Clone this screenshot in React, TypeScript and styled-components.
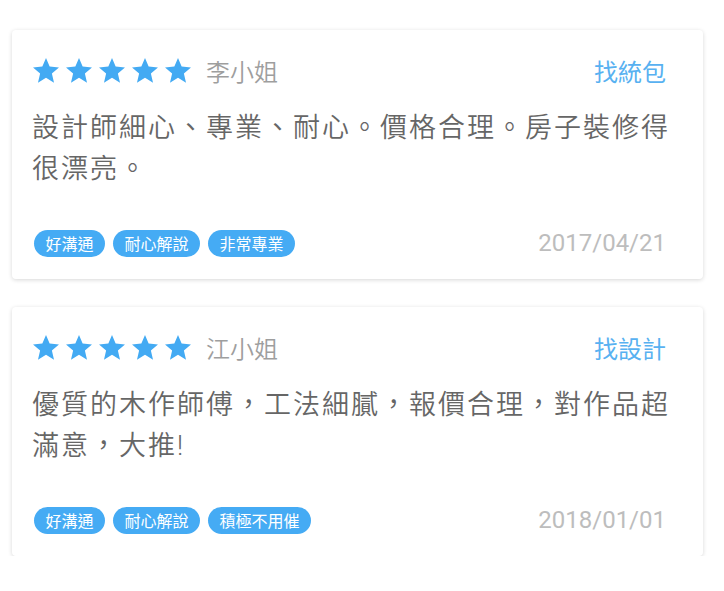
import styled, { createGlobalStyle } from "styled-components";

const GlobalStyle = createGlobalStyle`
  body {
    margin: 0;
    background: #ffffff;
    font-family: Roboto, "Noto Sans CJK TC", "Noto Sans", sans-serif;
  }
`;

interface Review {
  name: string;
  kind: string;
  text: string;
  tags: string[];
  date: string;
}

const reviews: Review[] = [
  {
    name: "李小姐",
    kind: "找統包",
    text: "設計師細心、專業、耐心。價格合理。房子裝修得很漂亮。",
    tags: ["好溝通", "耐心解說", "非常專業"],
    date: "2017/04/21",
  },
  {
    name: "江小姐",
    kind: "找設計",
    text: "優質的木作師傅，工法細膩，報價合理，對作品超滿意，大推!",
    tags: ["好溝通", "耐心解說", "積極不用催"],
    date: "2018/01/01",
  },
];

const List = styled.div`
  display: flex;
  flex-direction: column;
  gap: 28px;
  padding: 30px 0 0 12px;
  width: 691px;
`;

const Card = styled.div`
  background: #fff;
  border-radius: 4px;
  box-shadow: 0 1px 4px rgba(0, 0, 0, 0.16);
  padding: 23px 20px 22px 20px;
  height: 249px;
  box-sizing: border-box;
`;

const Header = styled.div`
  display: flex;
  align-items: center;
  height: 34px;
  padding-right: 17px;
`;

const Stars = styled.div`
  display: flex;
  gap: 7px;
  margin-left: 1px;
`;

const Name = styled.span`
  margin-left: 15px;
  font-size: 24px;
  color: #9e9e9e;
  font-weight: 350;
`;

const Kind = styled.span`
  margin-left: auto;
  font-size: 24px;
  color: #58b1f1;
`;

const Body = styled.p`
  margin: 21px 0 0 0;
  font-size: 27px;
  font-weight: 350;
  letter-spacing: 2px;
  line-height: 41px;
  color: #666666;
`;

const Footer = styled.div`
  display: flex;
  align-items: center;
  margin-top: 39px;
  padding-right: 17px;
`;

const Tags = styled.div`
  display: flex;
  gap: 8px;
  margin-left: 2px;
`;

const Tag = styled.span`
  display: inline-flex;
  align-items: center;
  height: 27px;
  padding: 0 11.5px;
  border-radius: 14px;
  background: #45abf4;
  color: #ffffff;
  font-size: 16px;
`;

const DateText = styled.span`
  margin-left: auto;
  font-size: 24px;
  color: #bdbdbd;
`;

function Star() {
  return (
    <svg width="26" height="25" viewBox="2 2 20 19.27">
      <path
        fill="#43aaf3"
        d="M12 17.27L18.18 21l-1.64-7.03L22 9.24l-7.19-.61L12 2 9.19 8.63 2 9.24l5.46 4.73L5.82 21z"
      />
    </svg>
  );
}

export default function App() {
  return (
    <>
      <GlobalStyle />
      <List>
        {reviews.map((r) => (
          <Card key={r.date}>
            <Header>
              <Stars>
                {[0, 1, 2, 3, 4].map((i) => (
                  <Star key={i} />
                ))}
              </Stars>
              <Name>{r.name}</Name>
              <Kind>{r.kind}</Kind>
            </Header>
            <Body>{r.text}</Body>
            <Footer>
              <Tags>
                {r.tags.map((t) => (
                  <Tag key={t}>{t}</Tag>
                ))}
              </Tags>
              <DateText>{r.date}</DateText>
            </Footer>
          </Card>
        ))}
      </List>
    </>
  );
}
